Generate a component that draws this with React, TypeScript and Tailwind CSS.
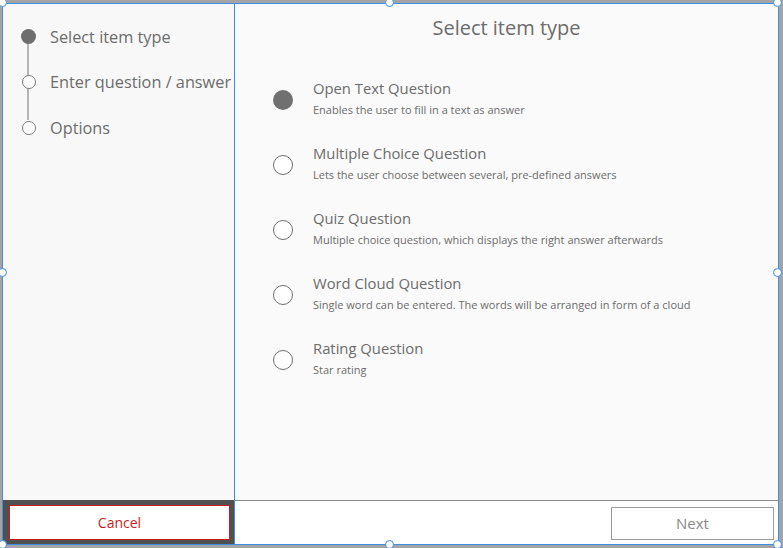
import React, { useState } from 'react';

const font = { fontFamily: '"Open Sans", "Noto Sans", "Liberation Sans", sans-serif' };

const steps = ['Select item type', 'Enter question / answer', 'Options'];

const itemTypes = [
  { title: 'Open Text Question', desc: 'Enables the user to fill in a text as answer' },
  { title: 'Multiple Choice Question', desc: 'Lets the user choose between several, pre-defined answers' },
  { title: 'Quiz Question', desc: 'Multiple choice question, which displays the right answer afterwards' },
  { title: 'Word Cloud Question', desc: 'Single word can be entered. The words will be arranged in form of a cloud' },
  { title: 'Rating Question', desc: 'Star rating' },
];

const Handle: React.FC<{ className: string }> = ({ className }) => (
  <div className={`absolute w-[9px] h-[9px] rounded-full bg-white border border-[#3d8ee8] ${className}`} />
);

const App: React.FC = () => {
  const [selected, setSelected] = useState(0);

  return (
    <div className="relative w-[783px] h-[548px] bg-[#a4a4a4] pt-[3px] pl-[2px] pr-[4px] pb-[3px]" style={font}>
      <div className="h-full flex border border-[#3d8ee8]">
        {/* Step list */}
        <div className="w-[232px] flex flex-col bg-[#f8f8f8] border-r border-[#3d8ee8]">
          <div className="relative flex-1 pt-[10px] pl-[18px]">
            <div className="absolute left-[24px] top-[25px] w-[2px] h-[91px] bg-[#b4b4b4]" />
            {steps.map((s, i) => (
              <div key={s} className="relative flex items-center h-[45.5px]">
                <div className="w-[15px] flex justify-center">
                  {i === 0 ? (
                    <div className="w-[15px] h-[15px] rounded-full bg-[#6e6e6e]" />
                  ) : (
                    <div className="w-[14px] h-[14px] rounded-full bg-white border border-[#7a7a7a]" />
                  )}
                </div>
                <span className="ml-[14px] text-[16.3px] text-[#6c6c6c] whitespace-nowrap">{s}</span>
              </div>
            ))}
          </div>
          <div className="h-[44px] bg-[#505050] pt-[5px] pb-[4px] pl-[6px] pr-[4px]">
            <button className="w-full h-full bg-white border border-[#c81e1e] text-[#c81e1e] text-[14px]">
              Cancel
            </button>
          </div>
        </div>

        {/* Item type chooser */}
        <div className="flex-1 flex flex-col bg-[#fafafa]">
          <div className="flex-1">
            <h1 className="text-center text-[20px] text-[#6c6c6c] pt-[9px]">Select item type</h1>
            <div className="mt-[35px] pl-[38px] flex flex-col gap-[22px]">
              {itemTypes.map((t, i) => (
                <div key={t.title} className="flex items-center cursor-pointer" onClick={() => setSelected(i)}>
                  <div className="w-[20px] h-[20px] flex items-center justify-center">
                    {selected === i ? (
                      <div className="w-[20px] h-[20px] rounded-full bg-[#707070]" />
                    ) : (
                      <div className="w-[20px] h-[20px] rounded-full bg-white border border-[#6e6e6e]" />
                    )}
                  </div>
                  <div className="ml-[20px]">
                    <div className="text-[14.8px] leading-[20px] text-[#6c6c6c]">{t.title}</div>
                    <div className="text-[11px] leading-[23px] text-[#6c6c6c]">{t.desc}</div>
                  </div>
                </div>
              ))}
            </div>
          </div>
          <div className="h-[44px] bg-white border-t border-[#8c8c8c] flex justify-end items-start pt-[6px] pr-[4px]">
            <button className="w-[163px] h-[33px] border border-[#9c9c9c] text-[#8a8a8a] text-[15px] bg-white">
              Next
            </button>
          </div>
        </div>
      </div>

      {/* selection handles */}
      <Handle className="left-[-2px] top-[-2px]" />
      <Handle className="left-[385px] top-[-2px]" />
      <Handle className="left-[773px] top-[-2px]" />
      <Handle className="left-[-2px] top-[268px]" />
      <Handle className="left-[773px] top-[268px]" />
      <Handle className="left-[-2px] top-[540px]" />
      <Handle className="left-[385px] top-[540px]" />
      <Handle className="left-[773px] top-[540px]" />
    </div>
  );
};

export default App;
